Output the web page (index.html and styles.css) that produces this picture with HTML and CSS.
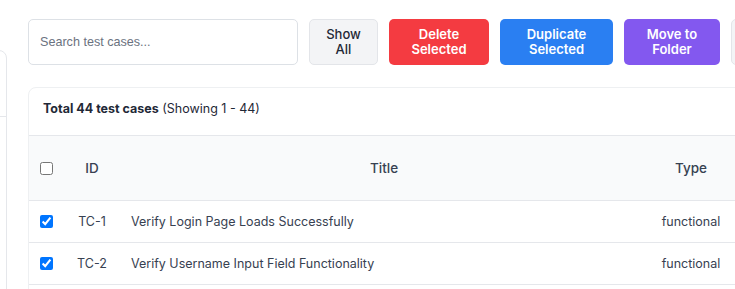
FILE: index.html
```html
<!DOCTYPE html>
<html lang="en">
<head>
<meta charset="utf-8">
<title>Test Cases</title>
<link rel="stylesheet" href="styles.css">
</head>
<body>
<div class="page">
  <aside class="sidebar">
    <div class="sidebar-head"></div>
  </aside>
  <main class="main">
    <div class="toolbar">
      <input class="search" type="text" placeholder="Search test cases...">
      <button class="btn btn-light btn-show">Show<br>All</button>
      <button class="btn btn-red btn-delete">Delete<br>Selected</button>
      <button class="btn btn-blue btn-dup">Duplicate<br>Selected</button>
      <button class="btn btn-purple btn-move">Move to<br>Folder</button>
      <button class="btn btn-light btn-more"></button>
    </div>
    <section class="card">
      <div class="card-head"><strong>Total 44 test cases</strong> (Showing 1 - 44)</div>
      <table class="cases">
        <colgroup>
          <col class="c-check">
          <col class="c-id">
          <col class="c-title">
          <col class="c-type">
          <col>
        </colgroup>
        <thead>
          <tr>
            <th class="cell-check"><input type="checkbox"></th>
            <th>ID</th>
            <th>Title</th>
            <th>Type</th>
            <th></th>
          </tr>
        </thead>
        <tbody>
          <tr>
            <td class="cell-check"><input type="checkbox" checked></td>
            <td class="cell-center">TC-1</td>
            <td>Verify Login Page Loads Successfully</td>
            <td class="cell-center">functional</td>
            <td></td>
          </tr>
          <tr>
            <td class="cell-check"><input type="checkbox" checked></td>
            <td class="cell-center">TC-2</td>
            <td>Verify Username Input Field Functionality</td>
            <td class="cell-center">functional</td>
            <td></td>
          </tr>
        </tbody>
      </table>
    </section>
  </main>
</div>
</body>
</html>
```

FILE: styles.css
```css
html, body {
  margin: 0;
  padding: 0;
  background: #ffffff;
}

body {
  font-family: Inter, "Noto Sans", sans-serif;
  color: #1f2937;
  width: 735px;
  height: 289px;
  overflow: hidden;
}

.page {
  display: flex;
  align-items: flex-start;
  width: 735px;
  height: 289px;
  overflow: hidden;
}

.sidebar {
  flex: none;
  width: 200px;
  height: 400px;
  margin-left: -193px;
  margin-top: 50px;
  border: 1px solid #e5e7eb;
  border-radius: 8px;
  box-sizing: border-box;
  background: #ffffff;
}

.sidebar-head {
  height: 65px;
  border-bottom: 1px solid #e5e7eb;
}

.main {
  flex: none;
  padding: 19px 0 0 21px;
}

.toolbar {
  display: flex;
  gap: 11px;
  height: 46px;
}

.search {
  flex: none;
  width: 270px;
  height: 46px;
  box-sizing: border-box;
  border: 1px solid #dde1e6;
  border-radius: 5px;
  padding: 0 11px;
  font-family: "Liberation Sans", Arial, sans-serif;
  font-size: 12.6px;
  color: #111827;
  outline: none;
}

.search::placeholder {
  color: #6b7280;
}

.btn {
  flex: none;
  height: 46px;
  box-sizing: border-box;
  border-radius: 5px;
  border: 1px solid transparent;
  padding: 0;
  font-family: Inter, "Noto Sans", sans-serif;
  font-size: 13px;
  line-height: 15px;
  font-weight: 600;
  text-align: center;
  color: #ffffff;
}

.btn-light {
  background: #f3f4f6;
  border-color: #e3e5e9;
  color: #1f2937;
  font-weight: 500;
}

.btn-red {
  background: #f43b41;
}

.btn-blue {
  background: #2a7ff2;
}

.btn-purple {
  background: #8358ef;
}

.btn-show { width: 69px; }
.btn-delete { width: 100px; }
.btn-dup { width: 113px; }
.btn-move { width: 96px; }
.btn-more { width: 80px; }

.card {
  margin-top: 22px;
  width: 900px;
  height: 260px;
  border: 1px solid #eef0f2;
  border-radius: 8px;
  background: #ffffff;
  overflow: hidden;
}

.card-head {
  padding: 13px 14px 18px;
  font-size: 12.5px;
  line-height: 16px;
  color: #1f2937;
  border-bottom: 1px solid #e5e7eb;
}

.card-head strong {
  font-weight: 700;
}

.cases {
  border-collapse: collapse;
  table-layout: fixed;
  width: 900px;
}

.c-check { width: 35px; }
.c-id { width: 56px; }
.c-title { width: 528px; }
.c-type { width: 86px; }

.cases thead tr {
  background: #f9fafb;
}

.cases th {
  height: 64px;
  padding: 0;
  font-size: 13.5px;
  font-weight: 500;
  color: #374151;
  text-align: center;
  vertical-align: middle;
  border-bottom: 1px solid #e5e7eb;
}

.cases td {
  height: 41px;
  padding: 0 11px;
  font-size: 12.5px;
  color: #374151;
  vertical-align: middle;
  border-bottom: 1px solid #e5e7eb;
  white-space: nowrap;
}

.cases .cell-check {
  padding: 0 0 0 11px;
  text-align: left;
}

.cases .cell-center {
  text-align: center;
  padding: 0;
}

.cell-check input {
  margin: 0;
  width: 13px;
  height: 13px;
  display: block;
}
```
